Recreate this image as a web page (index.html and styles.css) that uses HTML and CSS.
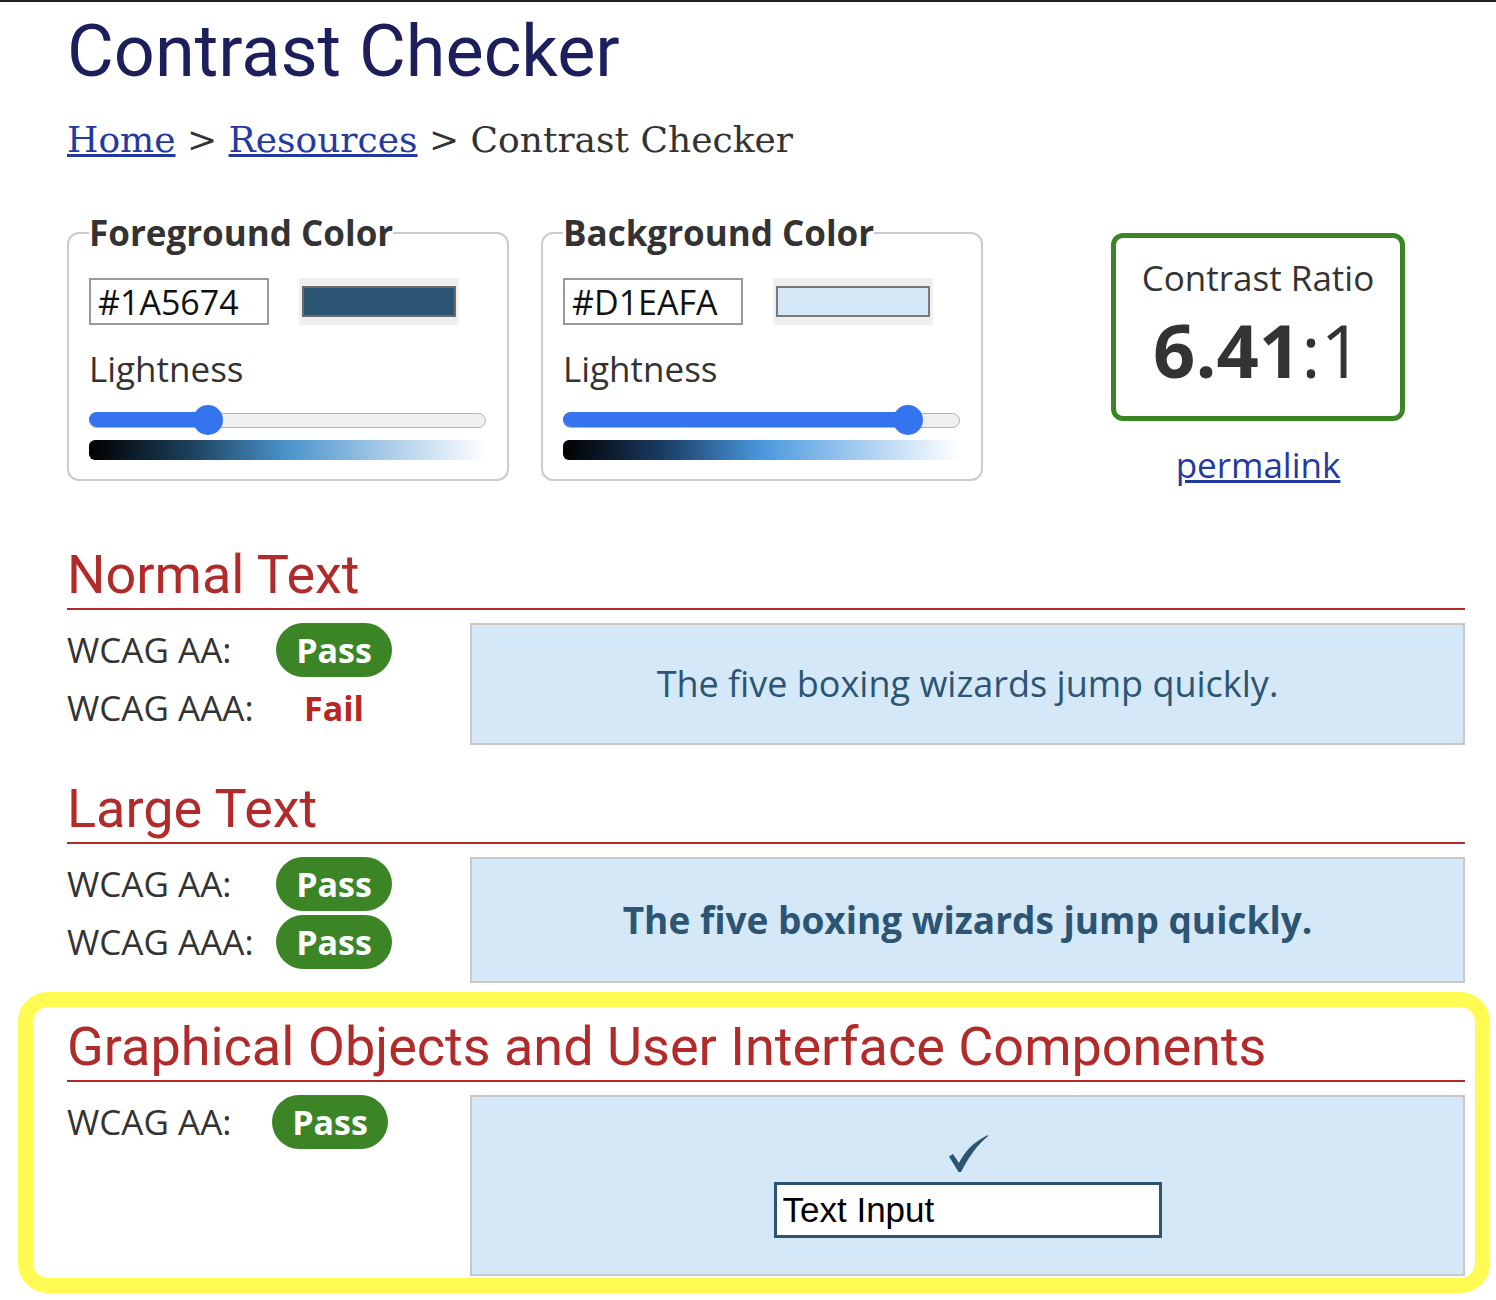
FILE: index.html
```html
<!DOCTYPE html>
<html lang="en">
<head>
<meta charset="utf-8">
<title>Contrast Checker</title>
<link rel="stylesheet" href="styles.css">
</head>
<body>
<div class="topbar"></div>
<main class="page">
  <h1 class="title">Contrast Checker</h1>
  <nav class="crumbs"><a href="#">Home</a> &gt; <a href="#">Resources</a> &gt; Contrast Checker</nav>

  <div class="pickers">
    <fieldset class="picker">
      <legend>Foreground Color</legend>
      <div class="picker-row">
        <input class="hex" type="text" value="#1A5674">
        <div class="swatch"><div class="swatch-fill swatch-fg"></div></div>
      </div>
      <div class="lightness">Lightness</div>
      <div class="slider">
        <div class="track"><div class="fill" style="width:120px"></div></div>
        <div class="thumb" style="left:104px"></div>
      </div>
      <div class="ramp ramp-fg"></div>
    </fieldset>

    <fieldset class="picker">
      <legend>Background Color</legend>
      <div class="picker-row">
        <input class="hex" type="text" value="#D1EAFA">
        <div class="swatch"><div class="swatch-fill swatch-bg"></div></div>
      </div>
      <div class="lightness">Lightness</div>
      <div class="slider">
        <div class="track"><div class="fill" style="width:346px"></div></div>
        <div class="thumb" style="left:330px"></div>
      </div>
      <div class="ramp ramp-bg"></div>
    </fieldset>

    <div class="ratio-col">
      <div class="ratio-box">
        <div class="ratio-label">Contrast Ratio</div>
        <div class="ratio-value"><b>6.41</b>:1</div>
      </div>
      <a class="permalink" href="#">permalink</a>
    </div>
  </div>

  <section class="result-section first">
    <h2 class="section-title">Normal Text</h2>
    <div class="result-body">
      <div class="checks">
        <div class="check-row"><span class="check-label">WCAG AA:</span><span class="badge">Pass</span></div>
        <div class="check-row"><span class="check-label">WCAG AAA:</span><span class="badge badge-fail">Fail</span></div>
      </div>
      <div class="sample sample-normal">The five boxing wizards jump quickly.</div>
    </div>
  </section>

  <section class="result-section">
    <h2 class="section-title">Large Text</h2>
    <div class="result-body">
      <div class="checks">
        <div class="check-row"><span class="check-label">WCAG AA:</span><span class="badge">Pass</span></div>
        <div class="check-row"><span class="check-label">WCAG AAA:</span><span class="badge">Pass</span></div>
      </div>
      <div class="sample sample-large">The five boxing wizards jump quickly.</div>
    </div>
  </section>

  <div class="highlight">
    <section class="result-section inner">
      <h2 class="section-title">Graphical Objects and User Interface Components</h2>
      <div class="result-body">
        <div class="checks">
          <div class="check-row"><span class="check-label check-label-narrow">WCAG AA:</span><span class="badge">Pass</span></div>
        </div>
        <div class="sample sample-ui">
          <svg class="check-icon" viewBox="0 0 40 37" aria-hidden="true">
            <path d="M1 21.5 L5 19 L11 28 C17 15.5 27 6 40 0 L40 1.2 C29 10 20.5 22.5 13 37 L10.5 37 Z" fill="#2b5573"/>
          </svg>
          <input class="ui-input" type="text" value="Text Input">
        </div>
      </div>
    </section>
  </div>
</main>
</body>
</html>
```

FILE: styles.css
```css
* { box-sizing: border-box; }

html, body {
  margin: 0;
  padding: 0;
  background: #fff;
}

body {
  font-family: "Open Sans", "DejaVu Sans", sans-serif;
  font-size: 35px;
  color: #333;
}

.topbar {
  height: 2px;
  background: #222;
}

.page {
  padding: 0 31px 0 67px;
}

.title {
  margin: 7px 0 0;
  font-family: Roboto, "Liberation Sans", sans-serif;
  font-weight: 400;
  font-size: 72px;
  line-height: 86px;
  color: #1d1e5c;
}

.crumbs {
  margin-top: 23.5px;
  font-family: "DejaVu Serif", "Liberation Serif", serif;
  font-size: 36px;
  line-height: 42px;
  color: #333;
}

.crumbs a {
  color: #243a9e;
}

/* pickers row */
.pickers {
  display: flex;
  align-items: flex-start;
  margin-top: 48.6px;
}

.picker {
  margin: 0;
  min-width: 0;
  width: 442px;
  flex: none;
  border: 2px solid #ccc;
  border-radius: 12px;
  padding: 21px 21px 19px 20px;
}

.picker + .picker {
  margin-left: 32px;
}

.picker legend {
  padding: 0;
  font-weight: 700;
  font-size: 35px;
  line-height: 48px;
  color: #333;
}

.picker-row {
  display: flex;
  height: 47px;
}

.hex {
  width: 180px;
  height: 47px;
  margin: 0;
  border: 2px solid #999;
  border-radius: 0;
  padding: 0 7px;
  font-family: "Open Sans", sans-serif;
  font-size: 34px;
  color: #111;
  background: #fff;
  outline: none;
}

.swatch {
  margin-left: 30px;
  width: 160px;
  height: 47px;
  padding: 8px 3px;
  background: #efefef;
}

.swatch-fill {
  height: 100%;
  border: 2px solid #6b6b6b;
}

.swatch-fg { background: #2c5573; }
.swatch-bg { background: #d5e8f7; border-color: #7a7a7a; }

.lightness {
  margin-top: 20px;
  font-size: 35px;
  line-height: 48px;
  color: #333;
}

.slider {
  position: relative;
  height: 30px;
  margin-top: 12px;
  padding-top: 7.5px;
}

.track {
  height: 15px;
  border: 1.5px solid #b3b3b3;
  border-radius: 8px;
  background: #efefef;
}

.fill {
  height: 15px;
  margin: -1.5px 0 0 -1.5px;
  border-radius: 8px 0 0 8px;
  background: #3574ef;
}

.thumb {
  position: absolute;
  top: 0;
  width: 30px;
  height: 30px;
  border-radius: 50%;
  background: #3574ef;
}

.ramp {
  margin-top: 5px;
  height: 20px;
  border-radius: 6px;
}

.ramp-fg {
  background: linear-gradient(to right, #000 0%, #1b3f5a 25%, #4a94cc 50%, #a9cce8 75%, #fff 100%);
}

.ramp-bg {
  background: linear-gradient(to right, #000 0%, #193c62 25%, #4a98dd 50%, #a6cdf0 75%, #fff 100%);
}

/* ratio */
.ratio-col {
  margin-left: 128px;
  margin-top: 24px;
  width: 294px;
  flex: none;
  text-align: center;
}

.ratio-box {
  border: 5px solid #3b8526;
  border-radius: 12px;
  padding: 16px 0 29px;
}

.ratio-label {
  font-size: 35px;
  line-height: 48px;
}

.ratio-value {
  margin-top: 11px;
  font-size: 74px;
  line-height: 74px;
  color: #333;
}

.ratio-value b {
  font-weight: 700;
}

.permalink {
  display: block;
  margin-top: 20px;
  font-size: 35px;
  line-height: 48px;
  color: #243a9e;
}

/* result sections */
.result-section {
  margin-top: 32px;
}

.result-section.first {
  margin-top: 54px;
}

.result-section.inner {
  margin-top: 0;
}

.section-title {
  margin: 0;
  padding-bottom: 2px;
  border-bottom: 2px solid #b22b2b;
  font-family: Roboto, "Liberation Sans", sans-serif;
  font-weight: 400;
  font-size: 54px;
  line-height: 63px;
  color: #b22b2b;
}

.result-body {
  display: flex;
  align-items: flex-start;
  margin-top: 13px;
}

.checks {
  width: 403px;
  flex: none;
  display: flex;
  flex-direction: column;
  gap: 4px;
}

.check-row {
  display: flex;
  align-items: baseline;
}

.check-label {
  width: 209px;
  flex: none;
  font-size: 35px;
  line-height: 48px;
  color: #333;
}

.check-label-narrow {
  width: 205px;
}

.badge {
  display: inline-block;
  width: 116px;
  padding: 4px 0;
  border-radius: 27px;
  background: #3b8526;
  color: #fff;
  font-weight: 700;
  font-size: 34px;
  line-height: 46px;
  text-align: center;
}

.badge-fail {
  background: transparent;
  color: #b8261f;
}

.sample {
  flex: 1;
  min-width: 0;
  background: #d5e8f7;
  border: 2px solid #c8c8c8;
  color: #2b5573;
  text-align: center;
}

.sample-normal {
  padding: 34px 10px;
  font-size: 36px;
  line-height: 50px;
}

.sample-large {
  padding: 34px 10px;
  font-size: 37px;
  font-weight: 700;
  line-height: 54px;
}

.sample-ui {
  display: flex;
  flex-direction: column;
  align-items: center;
  padding: 38px 10px 36px;
}

.check-icon {
  display: block;
  width: 40px;
  height: 37px;
}

.ui-input {
  margin: 10px 0 0;
  width: 388px;
  height: 56px;
  border: 3px solid #2b5573;
  border-radius: 0;
  padding: 0 6px;
  background: #fff;
  font-family: "Liberation Sans", Arial, sans-serif;
  font-size: 35px;
  color: #000;
  outline: none;
}

.highlight {
  margin: 9px -25px 0 -49px;
  border: 15px solid #fffb52;
  border-radius: 30px;
  padding: 7.5px 10px 2px 34px;
}
```
